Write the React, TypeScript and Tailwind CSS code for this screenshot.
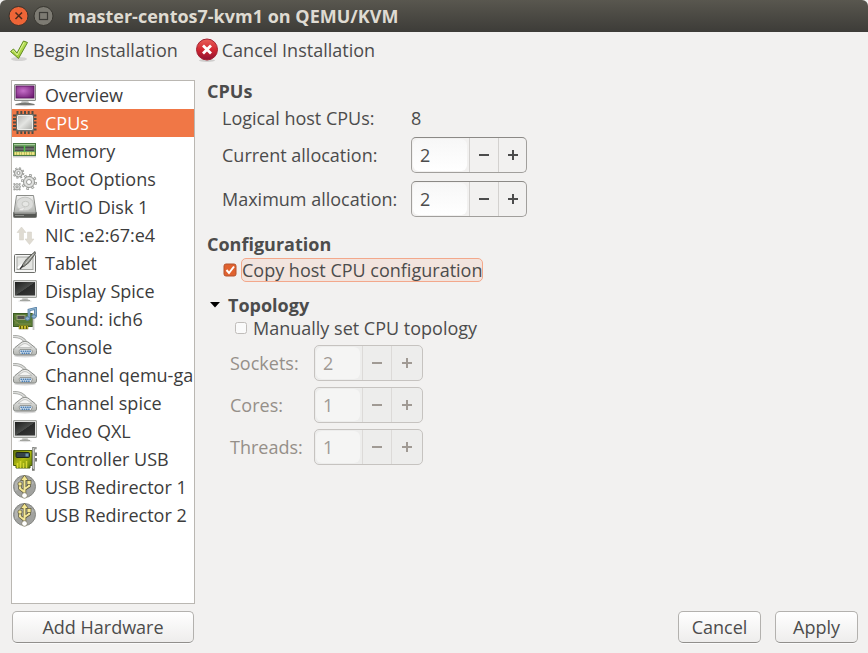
import { useState, type ReactNode } from "react";

function Svg({ children }: { children: ReactNode }) {
  return (
    <svg width="24" height="24" viewBox="0 0 24 24" className="shrink-0" aria-hidden="true">
      {children}
    </svg>
  );
}

function Defs() {
  return (
    <svg width="0" height="0" className="absolute" aria-hidden="true">
      <defs>
        <radialGradient id="purple" cx="40%" cy="40%" r="75%">
          <stop offset="0" stopColor="#c66fc9" />
          <stop offset="1" stopColor="#6c1a70" />
        </radialGradient>
        <linearGradient id="screen" x1="0" y1="0" x2="1" y2="1">
          <stop offset="0" stopColor="#1c1d1c" />
          <stop offset="0.5" stopColor="#4a4c4a" />
          <stop offset="0.52" stopColor="#2a2b2a" />
          <stop offset="1" stopColor="#3a3b3a" />
        </linearGradient>
        <linearGradient id="metal" x1="0" y1="0" x2="1" y2="1">
          <stop offset="0" stopColor="#b4b5b2" />
          <stop offset="0.5" stopColor="#e4e5e2" />
          <stop offset="1" stopColor="#a9aaa6" />
        </linearGradient>
        <linearGradient id="silver" x1="0" y1="0" x2="0" y2="1">
          <stop offset="0" stopColor="#f2f2f1" />
          <stop offset="1" stopColor="#b3b5b1" />
        </linearGradient>
        <linearGradient id="red" x1="0" y1="0" x2="0" y2="1">
          <stop offset="0" stopColor="#e8605a" />
          <stop offset="0.5" stopColor="#d32730" />
          <stop offset="1" stopColor="#8d1233" />
        </linearGradient>
        <linearGradient id="leaf" x1="0" y1="0" x2="0" y2="1">
          <stop offset="0" stopColor="#b9e05a" />
          <stop offset="1" stopColor="#a3cf35" />
        </linearGradient>
        <linearGradient id="olive" x1="0" y1="0" x2="1" y2="1">
          <stop offset="0" stopColor="#5d6f0b" />
          <stop offset="0.5" stopColor="#b1bb12" />
          <stop offset="1" stopColor="#5b7a0c" />
        </linearGradient>
      </defs>
    </svg>
  );
}

function OverviewIcon() {
  return (
    <Svg>
      <ellipse cx="12" cy="22" rx="10" ry="1.2" fill="#000" opacity="0.2" />
      <path d="M9 17h6l1 3H8z" fill="#c9cac7" />
      <path d="M2.500 21q9.500-3 19 0v1h-19z" fill="#777975" />
      <rect x="1.5" y="1.5" width="21" height="16" rx="0.5" fill="#dededc" stroke="#8b8d89" />
      <rect x="3" y="3" width="18" height="12" fill="url(#purple)" stroke="#5b1660" strokeWidth="0.8" />
    </Svg>
  );
}

function CpuIcon() {
  return (
    <Svg>
      <path
        d="M4.500 0v23M8.300 0v23M12 0v23M15.700 0v23M19.500 0v23M0 4.500h23.500M0 8h23.500M0 11.500h23.500M0 15h23.500M0 18.500h23.500"
        stroke="#4f4c44"
        strokeWidth="2"
      />
      <rect x="3" y="3" width="18" height="17.500" rx="1" fill="#6e6c65" />
      <rect x="4.500" y="4.500" width="15" height="14" rx="0.500" fill="url(#metal)" stroke="#ecedea" />
    </Svg>
  );
}

function MemoryIcon() {
  return (
    <Svg>
      <rect x="0" y="17" width="23" height="1.500" fill="#000" opacity="0.2" />
      <rect x="0.500" y="4.500" width="22" height="12" fill="#6c9c62" stroke="#4c7a45" />
      <path d="M1 5.500h21" stroke="#a9cf9d" />
      <rect x="2" y="7.500" width="19" height="4.500" fill="#4a4b4a" />
      <path d="M2 10h19" stroke="#8b8e89" />
      <path d="M11.500 6.500v6" stroke="#51c447" strokeWidth="1.500" />
      <path d="M1 14.500h21" stroke="#efe684" strokeWidth="2.800" />
      <path d="M1 14.500h21" stroke="#8f9a3a" strokeWidth="2.800" strokeDasharray=".5 2" />
    </Svg>
  );
}

function GearsIcon() {
  return (
    <Svg>
      <g fill="none" stroke="#8e908c" strokeWidth="0.900">
        <circle cx="16" cy="15" r="6.600" strokeWidth="2.600" strokeDasharray="2.590 2.590" />
        <circle cx="16" cy="15" r="6.600" stroke="#e3e4e2" strokeWidth="1.200" strokeDasharray="1.600 3.580" strokeDashoffset="-0.500" />
        <circle cx="16" cy="15" r="5.500" fill="#e0e1df" />
        <circle cx="16" cy="15" r="2.500" fill="#fff" />
        <circle cx="5.500" cy="6" r="4.800" strokeWidth="2" strokeDasharray="1.885 1.885" />
        <circle cx="5.500" cy="6" r="4.800" stroke="#e3e4e2" strokeDasharray="1.085 2.685" strokeDashoffset="-0.400" />
        <circle cx="5.500" cy="6" r="4" fill="#e0e1df" />
        <circle cx="5.500" cy="6" r="1.500" fill="#fff" />
        <path d="M.8 16.500l2 .8 1.200-.8 1.200.8 2-.8-.5 2 .8 1.300-.8 1.200.5 2-2-.5-1.200.5-1.200-.5-2 .5.500-2-.8-1.200.8-1.300z" fill="#dcdddb" />
        <circle cx="4" cy="19.800" r="1" fill="#fff" />
      </g>
    </Svg>
  );
}

function DiskIcon() {
  return (
    <Svg>
      <path d="M3.500 .5h17l2.500 17H1z" fill="url(#silver)" stroke="#8b8d89" />
      <path d="M.5 17.500h23v4q0 1-1 1h-21q-1 0-1-1z" fill="#555753" stroke="#777975" />
      <path d="M1.500 18h21" stroke="#c6c7c4" />
      <ellipse cx="12" cy="9" rx="8.500" ry="6.800" fill="#dcdddb" stroke="#c3c4c1" />
      <ellipse cx="12.500" cy="9" rx="3.500" ry="2.700" fill="#e6e7e5" stroke="#c0c1be" strokeWidth="0.800" />
      <path d="M6 15.500q0-2 3-2.500l3-1-1 2-1 1.500z" fill="#ececeb" stroke="#c6c7c4" strokeWidth="0.500" />
      <path d="M2 20.500h9" stroke="#8b8d89" />
    </Svg>
  );
}

function NetworkIcon() {
  return (
    <Svg>
      <g fill="#dfdbd2" stroke="#d3cec5" strokeWidth="0.500">
        <path d="M8.500 4l4.500 5.500h-2.500V17h-4V9.500H4z" />
        <path d="M14.500 9h4v7H21l-4.500 5.500L12 16h2.500z" />
      </g>
    </Svg>
  );
}

function TabletIcon() {
  return (
    <Svg>
      <rect x="1.500" y="3.500" width="21" height="18" rx="1" fill="#f7f7f6" stroke="#6b6d69" />
      <rect x="4" y="6" width="16" height="12.500" fill="#e4e5e2" stroke="#a4a6a2" />
      <path d="M5 17q5-5 13-9" stroke="#fff" strokeWidth="2" fill="none" />
      <path d="M22 .5l.5 2-6.500 9-5 4-2 .5.500-2.500 4-5.500z" fill="#8c8e88" stroke="#4b4d48" strokeWidth="0.800" />
      <path d="M20.500 3l-8 9.500" stroke="#d5d6d3" />
      <path d="M10 14.500L7 18" stroke="#333" strokeWidth="1.300" />
    </Svg>
  );
}

function DisplayIcon() {
  return (
    <Svg>
      <ellipse cx="12" cy="22" rx="7" ry="1.200" fill="#000" opacity="0.12" />
      <path d="M9.500 18h5l.5 3H9z" fill="#d3d4d1" />
      <path d="M7 21q5-1.500 10 0v1H7z" fill="#a2a49f" />
      <rect x="0.500" y="1.500" width="23" height="17" rx="0.500" fill="#dcdddb" stroke="#a2a49f" />
      <rect x="2" y="3" width="20" height="13.500" fill="url(#screen)" />
    </Svg>
  );
}

function SoundIcon() {
  return (
    <Svg>
      <rect x="0.500" y="6.500" width="19" height="13" fill="#587a35" stroke="#3c5b22" />
      <path d="M1 13l5 4h12M2 9h3M13 10h4M2 16h3" stroke="#8a9a4e" fill="none" strokeWidth="0.700" />
      <rect x="4" y="8.500" width="8" height="4" fill="#53524e" stroke="#9aa27c" />
      <rect x="6" y="18.500" width="9" height="3.500" fill="#c6bd2c" stroke="#6c6a10" strokeWidth="0.500" />
      <path d="M7.500 19v3M10.500 19v3M13.500 19v3" stroke="#5b5a12" />
      <path d="M20.500 6v17" stroke="#c9cac7" strokeWidth="1.800" />
      <path d="M16 11.500V3L22.500 1.500V9.500" fill="none" stroke="#537da3" strokeWidth="2.800" />
      <path d="M16 11.500V3L22.500 1.500V9.500" fill="none" stroke="#8fb4d1" strokeWidth="1.200" />
      <ellipse cx="14.500" cy="11.500" rx="2.200" ry="1.800" fill="#8fb4d1" stroke="#537da3" />
      <ellipse cx="21" cy="9.500" rx="2.200" ry="1.800" fill="#8fb4d1" stroke="#537da3" />
    </Svg>
  );
}

function SerialIcon() {
  return (
    <Svg>
      <ellipse cx="12" cy="21" rx="11" ry="1.500" fill="#000" opacity="0.15" />
      <path d="M0 1.500q8-.5 12.500 5" fill="none" stroke="#a0a29e" strokeWidth="3" />
      <path d="M0 1.500q8-.5 12.500 5" fill="none" stroke="#dcdddb" strokeWidth="1.500" />
      <path d="M2 12.500L9 7q3-1.500 6 0l7 5.500q1.500 1 1.500 3v2.500q0 2-2 2H2.500q-2 0-2-2v-2.500q0-2 1.500-3z" fill="url(#silver)" stroke="#8b8d89" />
      <path d="M5 12.500l5-3.500q2-1 4 0l5 3.500z" fill="#f4f4f3" stroke="#b5b6b3" strokeWidth="0.700" />
      <path d="M7 14.500h11l1.500 1.500-1.500 3.500H7.500L6 16z" fill="#dfe8f1" stroke="#888a86" strokeWidth="0.800" />
      <path d="M7.500 16.200h10.500M8.500 18.200h8.500" stroke="#4d80b5" strokeWidth="1.500" strokeDasharray="1.600 .6" />
    </Svg>
  );
}

function ControllerIcon() {
  return (
    <Svg>
      <path d="M0.500 3.500h18.500v15h-2v2.500H3v-2.500H.5z" fill="url(#olive)" stroke="#4b5c0b" />
      <rect x="3" y="5.500" width="13.500" height="5" rx="1" fill="#36444a" stroke="#1f2a18" />
      <path d="M12.500 8h3" stroke="#6e96ac" strokeWidth="3" />
      <path d="M4.500 21v-5M7.500 21v-7M10.500 21v-5M13.500 21v-7" stroke="#d5d530" strokeWidth="1.500" />
      <path d="M23.500 1H20.500v21.500h-1.500" fill="none" stroke="#71736e" strokeWidth="2.400" />
      <path d="M23.500 1H20.500v21" fill="none" stroke="#c6c7c4" />
      <path d="M23 5.500v3.500M23 11v3.500" stroke="#777975" strokeWidth="2" />
    </Svg>
  );
}

function UsbIcon() {
  return (
    <Svg>
      <circle cx="11.500" cy="11.500" r="11" fill="#a1a29f" stroke="#858783" />
      <path d="M2 8q9-10 19 0-3 4-19 8z" fill="#fff" opacity="0.2" />
      <path d="M11.500 3v18M11.500 17L7 13.500V9M11.500 14l4.500-3V7" fill="none" stroke="#5b5638" strokeWidth="3.400" />
      <path d="M11.500 .3l4 5.200h-8z" fill="#f6e88f" stroke="#5b5638" strokeWidth="0.800" />
      <path d="M11.500 4v16M11.500 17L7 13.500V9M11.500 14l4.500-3V7" fill="none" stroke="#f4e798" strokeWidth="2" />
      <circle cx="7" cy="9" r="2.100" fill="#f6e88f" stroke="#5b5638" strokeWidth="0.700" />
      <rect x="14" y="5.500" width="4" height="4" fill="#f6e88f" stroke="#5b5638" strokeWidth="0.700" />
      <circle cx="11.500" cy="20.500" r="2.800" fill="#fff" stroke="#77735a" strokeWidth="0.700" />
    </Svg>
  );
}

const devices = [
  { name: "Overview", Icon: OverviewIcon },
  { name: "CPUs", Icon: CpuIcon },
  { name: "Memory", Icon: MemoryIcon },
  { name: "Boot Options", Icon: GearsIcon },
  { name: "VirtIO Disk 1", Icon: DiskIcon },
  { name: "NIC :e2:67:e4", Icon: NetworkIcon },
  { name: "Tablet", Icon: TabletIcon },
  { name: "Display Spice", Icon: DisplayIcon },
  { name: "Sound: ich6", Icon: SoundIcon },
  { name: "Console", Icon: SerialIcon },
  { name: "Channel qemu-ga", Icon: SerialIcon },
  { name: "Channel spice", Icon: SerialIcon },
  { name: "Video QXL", Icon: DisplayIcon },
  { name: "Controller USB", Icon: ControllerIcon },
  { name: "USB Redirector 1", Icon: UsbIcon },
  { name: "USB Redirector 2", Icon: UsbIcon },
];

type SpinProps = { id: string; label: string; initial: number; disabled?: boolean };

function SpinBox({ id, label, initial, disabled = false }: SpinProps) {
  const [value, setValue] = useState(initial);
  const frame = disabled
    ? "w-[109px] border-[#c6c3c0] bg-[#ededec] text-[#a09a94]"
    : "w-[116px] border-[#a19f9c] border-t-[#8b8986] bg-[#f2f1f0] text-[#4c4c4c]";
  const divider = disabled ? "border-[#dcdad8]" : "border-[#d3d1cf]";
  return (
    <div className={`flex h-9 overflow-hidden rounded-[5px] border ${frame}`}>
      <input
        id={id}
        type="text"
        inputMode="numeric"
        value={value}
        disabled={disabled}
        onChange={(e) => setValue(Number(e.target.value) || 0)}
        className={`m-px mr-0.5 min-w-0 rounded-md pl-[7px] outline-none ${
          disabled ? "w-11 bg-[#f5f5f4]" : "w-[54px] bg-linear-to-b from-[#f7f7f7] to-white"
        }`}
      />
      <button
        type="button"
        aria-label={`Decrease ${label}`}
        disabled={disabled}
        onClick={() => setValue(Math.max(1, value - 1))}
        className={`flex w-[29px] shrink-0 items-center justify-center border-l ${divider}`}
      >
        <svg width="10" height="10" viewBox="0 0 10 10" aria-hidden="true">
          <path d="M0 4h10v2H0z" fill="currentColor" />
        </svg>
      </button>
      <button
        type="button"
        aria-label={`Increase ${label}`}
        disabled={disabled}
        onClick={() => setValue(value + 1)}
        className={`flex flex-1 items-center justify-center border-l ${divider}`}
      >
        <svg width="10" height="10" viewBox="0 0 10 10" aria-hidden="true">
          <path d="M0 4h4V0h2v4h4v2H6v4H4V6H0z" fill="currentColor" />
        </svg>
      </button>
    </div>
  );
}

const pushButton =
  "h-8 rounded-[5px] border border-[#b3b1ae] border-b-[#918f8c] bg-linear-to-b from-white to-[#eeedec] shadow-[0_1px_0_#fafafa]";

export default function App() {
  const [selected, setSelected] = useState("CPUs");
  const [copyHost, setCopyHost] = useState(true);
  const [manual, setManual] = useState(false);
  const [open, setOpen] = useState(true);

  return (
    <div className="flex min-h-screen flex-col bg-[#f2f1f0] font-['Open_Sans','Noto_Sans',sans-serif] text-[18px] leading-[22px] text-[#4c4c4c]">
      <Defs />
      <header className="flex h-8 items-center gap-1 rounded-t-md bg-linear-to-b from-[#59574f] to-[#3d3c38] pl-2">
        <button type="button" aria-label="Close" className="size-[21px]">
          <svg width="21" height="21" viewBox="0 0 21 21" aria-hidden="true">
            <circle cx="10.5" cy="10" r="9.5" fill="#ee6537" stroke="#3a322b" />
            <path d="M7.500 6.500l6.500 6.500M14 6.500L7.500 13" stroke="#4b2a1c" strokeWidth="1.500" />
          </svg>
        </button>
        <button type="button" aria-label="Maximize" className="size-[21px]">
          <svg width="21" height="21" viewBox="0 0 21 21" aria-hidden="true">
            <circle cx="10.500" cy="10" r="9.500" fill="#7d7b73" stroke="#37352f" />
            <rect x="6.500" y="6.500" width="8" height="7" fill="none" stroke="#3c3b37" strokeWidth="1.200" />
          </svg>
        </button>
        <h1 className="ml-2.5 font-bold text-[#dfdbd2]">master-centos7-kvm1 on QEMU/KVM</h1>
      </header>

      <div role="toolbar" className="flex h-9 items-center gap-[17px] pl-2">
        <button type="button" className="flex items-center gap-px whitespace-nowrap">
          <Svg>
            <ellipse cx="11" cy="21" rx="8" ry="2" fill="#000" opacity="0.12" />
            <path d="M2.500 13.500l3-2.500 3.500 4L15.500 3l4 1.500L10.500 20.500z" fill="url(#leaf)" stroke="#618a22" />
            <path d="M4 13.500l1.500-1 3.700 4.500L16 4.500" fill="none" stroke="#dcf39c" />
          </Svg>
          Begin Installation
        </button>
        <button type="button" className="flex items-center gap-[3px] whitespace-nowrap">
          <Svg>
            <ellipse cx="12" cy="22.500" rx="8" ry="1.500" fill="#000" opacity="0.15" />
            <circle cx="12" cy="11.500" r="10.500" fill="url(#red)" stroke="#a3202f" />
            <path d="M8 7.500l8 8M16 7.500l-8 8" stroke="#fff" strokeWidth="2.800" />
          </Svg>
          Cancel Installation
        </button>
      </div>

      <div className="flex flex-1 gap-3 pt-3 pl-[11px]">
        <nav aria-label="Hardware" className="w-[184px] shrink-0 border border-[#bab7b2] bg-white">
          <ul>
            {devices.map(({ name, Icon }) => (
              <li key={name}>
                <button
                  type="button"
                  aria-current={selected === name}
                  onClick={() => setSelected(name)}
                  className={`flex h-7 w-full items-center gap-2 pl-px text-left whitespace-nowrap ${
                    selected === name ? "bg-[#f07746] text-white" : "text-[#3c3c3c]"
                  }`}
                >
                  <Icon />
                  {name}
                </button>
              </li>
            ))}
          </ul>
        </nav>

        <main className="flex-1">
          <section>
            <h2 className="font-bold">CPUs</h2>
            <div className="mt-[5px] grid grid-cols-[189px_auto] items-center justify-start gap-y-2 pl-[15px]">
              <span>Logical host CPUs:</span>
              <output>8</output>
              <label htmlFor="current">Current allocation:</label>
              <SpinBox id="current" label="current allocation" initial={2} />
              <label htmlFor="maximum">Maximum allocation:</label>
              <SpinBox id="maximum" label="maximum allocation" initial={2} />
            </div>
          </section>

          <section className="mt-4">
            <h2 className="font-bold">Configuration</h2>
            <div className="mt-[3px] flex items-center pl-4">
              <input
                id="copy-host"
                type="checkbox"
                checked={copyHost}
                onChange={(e) => setCopyHost(e.target.checked)}
                className="sr-only"
              />
              <label htmlFor="copy-host" className="flex items-center gap-1">
                <svg width="14" height="14" viewBox="0 0 14 14" aria-hidden="true">
                  <rect x="1" y="1" width="12" height="12" rx="2" fill={copyHost ? "#e0622f" : "#fafafa"} stroke={copyHost ? "#b4532f" : "#b8b5b2"} />
                  {copyHost && <path d="M3.500 7l2.500 3 5-6.500" fill="none" stroke="#fff" strokeWidth="2" />}
                </svg>
                <span className="rounded-[5px] border border-[#f3a88b] bg-[#f2e4de] whitespace-nowrap">
                  Copy host CPU configuration
                </span>
              </label>
            </div>
          </section>

          <section className="mt-3">
            <h2 className="font-bold">
              <button type="button" aria-expanded={open} onClick={() => setOpen(!open)} className="flex items-center gap-2 pl-[3px]">
                <svg width="10" height="6" viewBox="0 0 10 6" aria-hidden="true" className={open ? "" : "-rotate-90"}>
                  <path d="M0 0h10L5 5.500z" fill="#000" />
                </svg>
                Topology
              </button>
            </h2>
            {open && (
              <>
                <div className="mt-px pl-[27px]">
                  <input
                    id="manual"
                    type="checkbox"
                    checked={manual}
                    onChange={(e) => setManual(e.target.checked)}
                    className="sr-only"
                  />
                  <label htmlFor="manual" className="flex items-center gap-[5px] whitespace-nowrap">
                    <svg width="14" height="14" viewBox="0 0 14 14" aria-hidden="true">
                      <rect x="1.500" y="1.500" width="11" height="11" rx="2" fill="#fafafa" stroke="#c0bdba" />
                      {manual && <path d="M3.500 7l2.500 3 5-6.500" fill="none" stroke="#e0622f" strokeWidth="2" />}
                    </svg>
                    Manually set CPU topology
                  </label>
                </div>
                <div className={`mt-1.5 grid grid-cols-[84px_auto] items-center justify-start gap-y-1.5 pl-[23px] ${manual ? "" : "text-[#958f89]"}`}>
                  <label htmlFor="sockets">Sockets:</label>
                  <SpinBox id="sockets" label="sockets" initial={2} disabled={!manual} />
                  <label htmlFor="cores">Cores:</label>
                  <SpinBox id="cores" label="cores" initial={1} disabled={!manual} />
                  <label htmlFor="threads">Threads:</label>
                  <SpinBox id="threads" label="threads" initial={1} disabled={!manual} />
                </div>
              </>
            )}
          </section>
        </main>
      </div>

      <footer className="flex items-center justify-between pt-[7px] pr-2.5 pb-2.5 pl-3">
        <button type="button" className={`${pushButton} w-[182px]`}>Add Hardware</button>
        <div className="flex gap-3.5">
          <button type="button" className={`${pushButton} w-[83px]`}>Cancel</button>
          <button type="button" className={`${pushButton} w-[83px]`}>Apply</button>
        </div>
      </footer>
    </div>
  );
}
